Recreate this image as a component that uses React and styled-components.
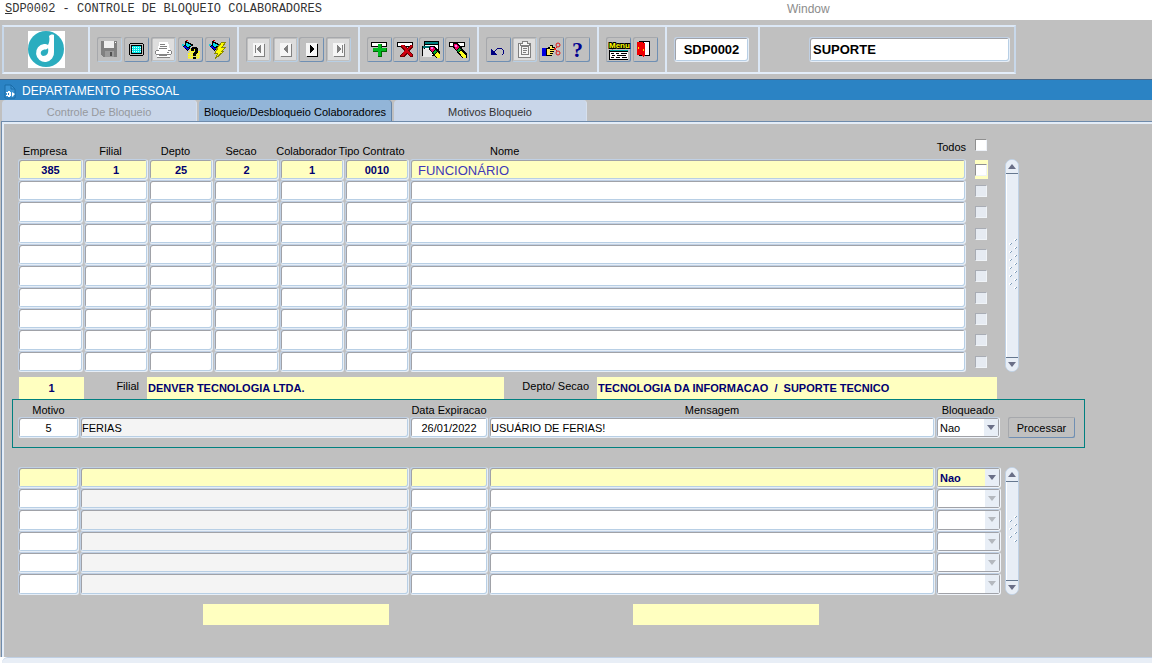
import React, { useState } from 'react';
import styled, { createGlobalStyle, css } from 'styled-components';

const employees = [
    { empresa: '385', filial: '1', depto: '25', secao: '2', colaborador: '1', contrato: '0010', nome: 'FUNCIONÁRIO' },
    ...Array(9).fill(null),
]

const numberColumns = [
    { key: 'empresa', title: 'Empresa', width: 66 },
    { key: 'filial', title: 'Filial', width: 65 },
    { key: 'depto', title: 'Depto', width: 65 },
    { key: 'secao', title: 'Secao', width: 66 },
    { key: 'colaborador', title: 'Colaborador', width: 65 },
    { key: 'contrato', title: 'Tipo Contrato', width: 65 },
]

const historyRows = [0, 1, 2, 3, 4, 5]

function Icon({children}) {
    return (
        <svg width="25" height="25" viewBox="0 0 25 25" shapeRendering="crispEdges" aria-hidden="true">
            {children}
        </svg>
    )
}

function SaveIcon() {
    return (
        <Icon>
            <path d="M4 4h16v16H6l-2-2z" fill="#808080" />
            <path d="M7 4h10v7H7z" fill="#f0f0f0" />
            <path d="M18 5h1v1h-1z" fill="#fff" />
            <path d="M8 14h9v6H8z" fill="#9a9a9a" />
            <path d="M13 15h2v4h-2z" fill="#505050" />
        </Icon>
    )
}

function ScreenIcon() {
    return (
        <Icon>
            <path d="M6 6h13v1h1v11h-1v1H6v-1H5V7h1z" fill="#000" />
            <path d="M6 7h13v11H6z" fill="#c0c0c0" />
            <path d="M7 8h11v9H7z" fill="#000" />
            <path d="M8 9h9v7H8z" fill="#00e8e8" />
            <path d="M8 10h9M8 12h9M8 14h9" transform="translate(0 .5)" stroke="#d8ffff" strokeDasharray="1 1" />
        </Icon>
    )
}

function PrintIcon() {
    return (
        <Icon>
            <path d="M2 2h21v21H2z" fill="#dedede" />
            <path d="M8 5h9l2 8H7z" fill="#fff" />
            <path d="M9 7.5h5M9 9.5h7M8 11.5h8" stroke="#808080" />
            <path d="M5 13h15v4H5zM6 18h13v2H6z" fill="#fff" />
            <path d="M5 13.5h3M17 13.5h3M4.5 14v3M20.5 14v3M5 17.5h15M6 20.5h13M16 15.5h2M8 18.5h8" stroke="#858585" fill="none" />
        </Icon>
    )
}

function Torch() {
    return (
        <>
            <path d="M7 4h2v1h2v1h2v1h2v2h-2v1h-1v2h-1v1h-1v1H9v-1H8v-1H7v-1H6v-1H5V8h2z" fill="#000" />
            <path d="M8 6h2v1h2v1h1v1h-2v1H9V9H8z" fill="#00d8e8" />
            <path d="M6 9h2v1h1v1h2v1h-1v1H9v-1H8v-1H6z" fill="#0000f0" />
            <path d="M4 7h2v2H4z" fill="#20c8d8" />
            <path d="M8 3h2v1H8z" fill="#e00000" />
        </>
    )
}

function QueryIcon() {
    return (
        <Icon>
            <path d="M12 12h8v2h2v7h-1v1H10v-6h2z" fill="#e6e070" />
            <path d="M12 12.5h8M11 14.5h11M10 16.5h12M10 18.5h12M10 20.5h12" stroke="#ffff00" strokeDasharray="2 1" />
            <Torch />
            <path d="M14 10h5v1h1v5h-1v1h-1v2h-3v-3h1v-1h1v-3h-1v2h-3v-3h1zM15 20h3v2h-3z" fill="#000" />
        </Icon>
    )
}

function BoltIcon() {
    return (
        <Icon>
            <Torch />
            <path d="M17 5h4l-4 5h4l-4 4h2L10 22l3-6h-3l3-5h-1z" fill="#ffff00" stroke="#8a8a00" />
        </Icon>
    )
}

function NavIcon({dir, stop, active}) {
    const ink = active ? '#000' : '#808080'
    return (
        <Icon>
            {!active && <path d="M2 2h21v21H2z" fill="#dcdcdc" />}
            <path d="M8 7h11v13H8z" fill={ink} />
            <path d="M7 6h11v13H7z" fill="#f6f6f6" />
            <path d={dir === 'next' ? 'M11 8v8h1v-1h1v-1h1v-1h1v-2h-1v-1h-1V9h-1V8z' : 'M15 8v8h-1v-1h-1v-1h-1v-1h-1v-2h1v-1h1V9h1V8z'} fill={ink} />
            {stop && <path d={dir === 'next' ? 'M16 8h1v8h-1z' : 'M9 8h1v8H9z'} fill={ink} />}
        </Icon>
    )
}

function RecordBar() {
    return (
        <>
            <path d="M4 5h16v5H4z" fill="#000" />
            <path d="M5 6h14v3H5z" fill="#fff" />
        </>
    )
}

function InsertIcon() {
    return (
        <Icon>
            <RecordBar />
            <path d="M11 7h4v4h5v4h-5v5h-4v-5H6v-4h5z" fill="#006800" />
            <path d="M11 7h3v4h5v3h-5v5h-3v-5H6v-3h5z" fill="#00b820" />
        </Icon>
    )
}

function DeleteIcon() {
    return (
        <Icon>
            <RecordBar />
            <path d="M8 8h3l3 3 3-3h3v2l-4 4 4 4v2h-3l-3-3-3 3H7v-2l4-4-3-3z" fill="#6c0000" />
            <path d="M8 8h2l4 4 4-4h1v1l-4 4 4 5v1h-2l-3-4-4 4H8l4-6-4-4z" fill="#d00010" />
        </Icon>
    )
}

function ClearFormIcon() {
    return (
        <Icon>
            <path d="M5 4h15v15H5z" fill="#000" />
            <path d="M6 5h13v2H6z" fill="#008080" />
            <path d="M6 8h13v10H6z" fill="#fff" />
            <path d="M4 9h11v2H4z" fill="#007070" />
            <path d="M4 12h9v8H4z" fill="#e8e8e8" />
            <path d="M3 9h1v10H3zM15 9h1v3h-1z" fill="#000" />
            <path d="M11 9h4l6 6v6h-4l-7-9z" fill="#000" />
            <path d="M11 10h3l2 2-3 3-2-3z" fill="#f00060" />
            <path d="M12 10h2v2h-2z" fill="#ff70f0" />
            <path d="M16 13l2 2-3 2-1-1z" fill="#00a830" />
            <path d="M18 15l3 3v3h-3l-2-3z" fill="#ffff20" />
        </Icon>
    )
}

function ClearRecordIcon() {
    return (
        <Icon>
            <RecordBar />
            <path d="M8 6h5l9 11v4h-5L8 10z" fill="#000" />
            <path d="M9 7h3l2 3-3 3-2-4z" fill="#f00060" />
            <path d="M10 8h2v2h-2z" fill="#ff70f0" />
            <path d="M14 11l2 2-3 2-1-1z" fill="#00a830" />
            <path d="M16 13l5 6v2h-3l-4-6z" fill="#ffff20" />
        </Icon>
    )
}

function UndoIcon() {
    return (
        <Icon>
            <path d="M5 12h1v1h1v1h1v1h1v1h1v1h1v1H5z" fill="#000080" />
            <path d="M8 14h1v-1h1v-1h1v-1h5v1h1v1h1v4h-1v1h-1v-1h1v-4h-1v-1h-5v1h-1v1H9v1H8z" fill="#000080" />
        </Icon>
    )
}

function PasteIcon() {
    return (
        <Icon>
            <path d="M2 2h21v21H2z" fill="#dedede" />
            <path d="M6.5 6.5h12v14h-12zM9.5 9.5h7v8h-7z" fill="#f4f4f4" stroke="#808080" />
            <path d="M10 4h5v2h2v2H8V6h2z" fill="#f8f8f8" stroke="#808080" />
            <path d="M11 11.5h4M11 13.5h4M11 15.5h3" stroke="#808080" />
        </Icon>
    )
}

function CutIcon() {
    return (
        <Icon>
            <path d="M3 11h4v8H3z" fill="#0000e0" />
            <path d="M7 11h2v-1h2V8h3v2h2v3h-1v2h-1v2h-1v2H7z" fill="#000" />
            <path d="M8 12h3V9h2v2h2v1h-4v1h4v1h-4v1h3v1h-3v1h2v1H8z" fill="#ffe860" />
            <g fill="none" stroke="#e01818" shapeRendering="auto">
                <path d="M15 13l3-3M15 11l3 3" />
                <circle cx="19" cy="8" r="2" />
                <circle cx="19" cy="16" r="2" />
            </g>
        </Icon>
    )
}

function ExitIcon() {
    return (
        <Icon>
            <path d="M6 4h11v15H6z" fill="#000" />
            <path d="M11 5h5v13h-5z" fill="#fff" />
            <path d="M4 5h6v1h2v13h-1v1h-1v-1H9v-1H4z" fill="#f00000" />
            <path d="M5 10h1v2H5zM10 12h1v2h-1z" fill="#ffe000" />
        </Icon>
    )
}

function MenuIcon() {
    return (
        <Icon>
            <MenuWord x="3" y="11">Menu</MenuWord>
            <path d="M3 13h19v10H3z" fill="#000" />
            <path d="M4 13h18v1H4z" fill="#00a0a0" />
            <path d="M4 15h18v7H4z" fill="#fff" />
            <path d="M5 16.5h3M10 16.5h3M15 16.5h6M6 18.5h3M11 18.5h9M5 20.5h3M10 20.5h4M16 20.5h5" stroke="#000" />
        </Icon>
    )
}

function Logo() {
    return (
        <svg width="37" height="37" viewBox="0 0 37 37" role="img" aria-label="Denver">
            <rect width="37" height="37" fill="#fff" />
            <circle cx="18" cy="18" r="18" fill="#2badbf" />
            <path d="M21 5c1-1 3-2 5-1v17a9 9 0 1 1-10-8c2 0 3 0 4 1 1-2 2-5 1-9z" fill="#fff" />
            <path d="M20 17c1 5-1 8-5 8-3-1-3-5 0-6 2-1 4 0 5-2z" fill="#2badbf" />
        </svg>
    )
}

function FormIcon() {
    return (
        <svg width="12" height="15" viewBox="0 0 12 15" aria-hidden="true">
            <path d="M1 1h6l4 4v9H1z" fill="#3a93d4" stroke="#1a6ca8" />
            <path d="M7 1v4h4" fill="none" stroke="#1a6ca8" />
            <path d="M4 7h2v1h1v4H6v1H4v-1H2v-1h1V9H2V8h2zM8 8l3 2-3 3z" fill="#fff" />
            <path d="M4 9h1v2H4z" fill="#2b83c4" />
        </svg>
    )
}

function ScrollBar({dots, label}) {
    const height = dots * 8
    return (
        <StyledScrollBar role="group" aria-label={label}>
            <ScrollButton type="button" aria-label="Rolar para cima">
                <svg width="8" height="5" viewBox="0 0 8 5"><path d="M0 5l4-5 4 5z" fill="#6a6f87" /></svg>
            </ScrollButton>
            <ScrollTrack>
                <svg width="10" height={height} viewBox={`0 0 10 ${height}`} shapeRendering="crispEdges" aria-hidden="true">
                    {Array.from({ length: dots * 2 - 1 }, (_, i) => {
                        const x = i % 2 ? 1 : 6
                        const y = i * 4 + 1
                        return (
                            <g key={i}>
                                <path d={`M${x} ${y}h2v1h-1v1h-1z`} fill="#fff" />
                                <path d={`M${x + 2} ${y}h1v1h-1v1h-1v-1h1z`} fill="#7f9db9" />
                            </g>
                        )
                    })}
                </svg>
            </ScrollTrack>
            <ScrollButton type="button" $down aria-label="Rolar para baixo">
                <svg width="8" height="5" viewBox="0 0 8 5"><path d="M0 0h8l-4 5z" fill="#6a6f87" /></svg>
            </ScrollButton>
        </StyledScrollBar>
    )
}

function Select({id, label, value, current, disabled}) {
    return (
        <SelectBox $disabled={disabled}>
            <StyledSelect id={id} aria-label={label} defaultValue={value} disabled={disabled} $current={current}>
                {disabled ? <option value=""></option> : <><option>Nao</option><option>Sim</option></>}
            </StyledSelect>
        </SelectBox>
    )
}

function Toolbar() {
    return (
        <ToolbarArea>
            <ToolbarFrame>
                <Section $width={86}><Logo /></Section>
                <Section $width={149} $spread>
                    <ToolButton aria-label="Salvar" disabled><SaveIcon /></ToolButton>
                    <ToolButton aria-label="Tela"><ScreenIcon /></ToolButton>
                    <ToolButton aria-label="Imprimir" disabled><PrintIcon /></ToolButton>
                    <ToolButton aria-label="Entrar consulta"><QueryIcon /></ToolButton>
                    <ToolButton aria-label="Executar consulta"><BoltIcon /></ToolButton>
                </Section>
                <Section $width={121} $spread>
                    <ToolButton aria-label="Primeiro" disabled><NavIcon dir="prev" stop /></ToolButton>
                    <ToolButton aria-label="Anterior" disabled><NavIcon dir="prev" /></ToolButton>
                    <ToolButton aria-label="Proximo"><NavIcon dir="next" active /></ToolButton>
                    <ToolButton aria-label="Ultimo" disabled><NavIcon dir="next" stop /></ToolButton>
                </Section>
                <Section $width={119} $spread>
                    <ToolButton aria-label="Inserir"><InsertIcon /></ToolButton>
                    <ToolButton aria-label="Excluir"><DeleteIcon /></ToolButton>
                    <ToolButton aria-label="Limpar tela"><ClearFormIcon /></ToolButton>
                    <ToolButton aria-label="Limpar registro"><ClearRecordIcon /></ToolButton>
                </Section>
                <Section $width={120} $spread>
                    <ToolButton aria-label="Desfazer"><UndoIcon /></ToolButton>
                    <ToolButton aria-label="Colar" disabled><PasteIcon /></ToolButton>
                    <ToolButton aria-label="Recortar"><CutIcon /></ToolButton>
                    <ToolButton aria-label="Ajuda"><HelpMark>?</HelpMark></ToolButton>
                </Section>
                <Section $width={68} $spread>
                    <ToolButton aria-label="Menu"><MenuIcon /></ToolButton>
                    <ToolButton aria-label="Sair"><ExitIcon /></ToolButton>
                </Section>
                <Section $width={93} $spread>
                    <ToolbarInput aria-label="Programa" defaultValue="SDP0002" $width={75} $center />
                </Section>
                <Section $width={254} $end>
                    <ToolbarInput aria-label="Usuario" defaultValue="SUPORTE" $width={201} />
                </Section>
            </ToolbarFrame>
        </ToolbarArea>
    )
}

function EmployeesTable() {
    let [all, setAll] = useState(false)

    return (
        <Block>
            <Table>
                <colgroup>
                    {numberColumns.map(c => <Col key={c.key} $width={c.width} />)}
                    <col />
                    <Col $width={38} />
                </colgroup>
                <thead>
                    <tr>
                        {numberColumns.map(c => (
                            <HeadCell key={c.key} scope="col"><HeadText>{c.title}</HeadText></HeadCell>
                        ))}
                        <HeadCell scope="col">
                            <NameHead>
                                <span>Nome</span>
                                <AllLabel htmlFor="todos">Todos</AllLabel>
                            </NameHead>
                        </HeadCell>
                        <CheckHead>
                            <CheckBox id="todos" type="checkbox" checked={all} onChange={e => setAll(e.target.checked)} />
                        </CheckHead>
                    </tr>
                </thead>
                <tbody>
                    {employees.map((row, i) => (
                        <tr key={i}>
                            {numberColumns.map(c => (
                                <Cell key={c.key}>
                                    <Input aria-label={`${c.title} ${i + 1}`} defaultValue={row ? row[c.key] : ''} $current={!!row} $center />
                                </Cell>
                            ))}
                            <Cell>
                                <NameInput aria-label={`Nome ${i + 1}`} defaultValue={row ? row.nome : ''} $current={!!row} />
                            </Cell>
                            <Cell>
                                <CheckSlot $current={!!row}>
                                    <CheckBox type="checkbox" aria-label={`Selecionar ${i + 1}`} disabled={!row} />
                                </CheckSlot>
                            </Cell>
                        </tr>
                    ))}
                </tbody>
            </Table>
            <ScrollSlot $offset={35}><ScrollBar dots={7} label="Rolagem de colaboradores" /></ScrollSlot>
        </Block>
    )
}

function HistoryTable() {
    return (
        <Block $gap={19}>
            <Table>
                <colgroup>
                    <Col $width={62} />
                    <Col $width={330} />
                    <Col $width={79} />
                    <col />
                    <Col $width={69} />
                </colgroup>
                <tbody>
                    {historyRows.map(i => (
                        <tr key={i}>
                            <Cell><Input aria-label={`Motivo ${i + 1}`} $current={i === 0} $center /></Cell>
                            <Cell><Input aria-label={`Descricao ${i + 1}`} readOnly $current={i === 0} $muted /></Cell>
                            <Cell><Input aria-label={`Data ${i + 1}`} $current={i === 0} $center /></Cell>
                            <Cell><Input aria-label={`Mensagem ${i + 1}`} $current={i === 0} /></Cell>
                            <SelectCell>
                                <Select label={`Bloqueado ${i + 1}`} value={i === 0 ? 'Nao' : ''} current={i === 0} disabled={i !== 0} />
                            </SelectCell>
                        </tr>
                    ))}
                </tbody>
            </Table>
            <ScrollSlot $offset={0}><ScrollBar dots={4} label="Rolagem do historico" /></ScrollSlot>
        </Block>
    )
}

function App() {
    let [tab, setTab] = useState(1)

    return (
        <>
            <GlobalStyle />
            <Page>
                <MenuBar>
                    <MenuTitle><u>S</u>DP0002 - CONTROLE DE BLOQUEIO COLABORADORES</MenuTitle>
                    <WindowMenu type="button">Window</WindowMenu>
                </MenuBar>
                <Toolbar />
                <TitleBar><FormIcon /><h1>DEPARTAMENTO PESSOAL</h1></TitleBar>
                <Tabs role="tablist">
                    <Tab role="tab" disabled>Controle De Bloqueio</Tab>
                    <Tab role="tab" aria-selected={tab === 1} $active={tab === 1} onClick={() => setTab(1)}>Bloqueio/Desbloqueio Colaboradores</Tab>
                    <Tab role="tab" aria-selected={tab === 2} $active={tab === 2} onClick={() => setTab(2)}>Motivos Bloqueio</Tab>
                </Tabs>
                <Panel>
                    <EmployeesTable />
                    <Summary>
                        <SummaryValue aria-label="Codigo filial" defaultValue="1" readOnly $center />
                        <SummaryLabel htmlFor="filial">Filial</SummaryLabel>
                        <SummaryValue id="filial" defaultValue="DENVER TECNOLOGIA LTDA." readOnly />
                        <SummaryLabel htmlFor="depto">Depto/ Secao</SummaryLabel>
                        <SummaryValue id="depto" defaultValue="TECNOLOGIA DA INFORMACAO  /  SUPORTE TECNICO" readOnly />
                    </Summary>
                    <BlockForm onSubmit={e => e.preventDefault()}>
                        <Field>
                            <label htmlFor="motivo">Motivo</label>
                            <Input id="motivo" defaultValue="5" $center />
                        </Field>
                        <Field>
                            <Input aria-label="Descricao do motivo" defaultValue="FERIAS" readOnly $muted />
                        </Field>
                        <Field>
                            <label htmlFor="data">Data Expiracao</label>
                            <Input id="data" defaultValue="26/01/2022" $center />
                        </Field>
                        <Field>
                            <label htmlFor="mensagem">Mensagem</label>
                            <Input id="mensagem" defaultValue="USUÁRIO DE FERIAS!" />
                        </Field>
                        <Field>
                            <label htmlFor="bloqueado">Bloqueado</label>
                            <Select id="bloqueado" value="Nao" />
                        </Field>
                        <ProcessButton type="submit">Processar</ProcessButton>
                    </BlockForm>
                    <HistoryTable />
                    <Footer>
                        <FooterValue aria-label="Usuario inclusao" readOnly />
                        <FooterValue aria-label="Usuario alteracao" readOnly />
                    </Footer>
                </Panel>
                <StatusArea><StatusBar /></StatusArea>
            </Page>
        </>
    );
}

export default App;

// Styled Components

const GlobalStyle = createGlobalStyle`
    * {
        box-sizing: border-box;
    }
    body {
        margin: 0;
        background-color: #c0c0c0;
        font-family: "Liberation Sans", Arial, sans-serif;
        font-size: 11px;
        line-height: 14px;
        color: #000;
    }
    button, input, select {
        margin: 0;
        padding: 0;
        font: inherit;
        color: inherit;
    }
    svg {
        display: block;
    }
`

/* sunken edge shared by the text boxes and lists */
const sunken = css`
    border: 1px solid;
    border-color: #c0d0e4 #e6eef7 #e6eef7 #c0d0e4;
    border-radius: 3px;
    box-shadow: inset 1px 1px #a0a2a8, inset -1px -1px #b8cfe5;
    outline: none;
`

const Page = styled.div`
    display: flex;
    flex-direction: column;
    min-height: 100vh;
`

const MenuBar = styled.header`
    display: grid;
    grid-template-columns: 787px 1fr;
    align-items: center;
    height: 20px;
    padding-bottom: 2px;
    background-color: #fff;
`

const MenuTitle = styled.span`
    padding-left: 5px;
    font-family: "Liberation Mono", "Courier New", monospace;
    font-size: 12px;
    color: #333;
`

const WindowMenu = styled.button`
    justify-self: start;
    border: 0;
    background: none;
    font-size: 12px;
    color: #8c8c8c;
`

const ToolbarArea = styled.div`
    padding: 5px 2px;
`

const ToolbarFrame = styled.div`
    display: flex;
    width: fit-content;
    height: 49px;
    border: 2px solid;
    border-color: #dce8f6 #c8d8ea #e4eefa #c8d8ea;
`

const Section = styled.div`
    display: flex;
    align-items: center;
    justify-content: ${p => p.$spread ? 'space-between' : p.$end ? 'flex-end' : 'center'};
    width: ${p => p.$width}px;
    padding: 0 ${p => p.$end ? 4 : 7}px;
    border-right: 2px solid #dce8f6;
    &:last-child {
        border-right: 0;
    }
`

const ToolButton = styled.button.attrs({ type: 'button' })`
    display: flex;
    align-items: center;
    justify-content: center;
    width: 25px;
    height: 25px;
    border: 0;
    border-radius: 2px;
    background-color: #c0c0c0;
    box-shadow: inset 1px 1px #a6a8ac, inset -1px -1px #6f8fb3;
    &:disabled {
        box-shadow: inset 1px 1px #a6a8ac, inset -1px -1px #b8cfe5;
    }
`

const HelpMark = styled.span`
    font-family: "Liberation Serif", "Times New Roman", serif;
    font-size: 22px;
    font-weight: 700;
    line-height: 24px;
    color: #000090;
`

const MenuWord = styled.text`
    font-family: "Liberation Sans", Arial, sans-serif;
    font-size: 8px;
    font-weight: 700;
    fill: #ffff00;
    stroke: #000;
    stroke-width: 2px;
    paint-order: stroke;
`

const ToolbarInput = styled.input`
    ${sunken}
    width: ${p => p.$width}px;
    height: 25px;
    padding: 0 3px;
    background-color: #fff;
    font-size: 13px;
    font-weight: 700;
    text-align: ${p => p.$center ? 'center' : 'left'};
`

const TitleBar = styled.div`
    display: flex;
    align-items: center;
    gap: 6px;
    height: 21px;
    padding: 2px 4px 0;
    border-top: 1px solid #4a6a8c;
    background-color: #2b83c4;
    color: #fff;
    h1 {
        margin: 0;
        font-size: 12px;
        font-weight: 400;
    }
`

const Tabs = styled.div`
    display: flex;
    gap: 2px;
    height: 21px;
    padding-left: 2px;
`

const Tab = styled.button.attrs({ type: 'button' })`
    width: 193px;
    padding-top: 3px;
    border: 0;
    border-right: 1px solid ${p => p.$active ? '#6585a8' : '#d6e0ee'};
    border-radius: 4px 4px 0 0;
    background-color: ${p => p.$active ? '#92b5d8' : '#c9d6e9'};
    color: ${p => p.$active ? '#000' : '#333'};
    white-space: nowrap;
    &:disabled {
        width: 195px;
        color: #96999e;
    }
`

const Panel = styled.main`
    flex: 1;
    margin-left: 1px;
    padding: 2px 67px 0 10px;
    border-top: 1px solid #6f8bab;
    border-left: 1px solid #6f8bab;
    box-shadow: inset 2px 2px #e4edf8;
`

const Block = styled.div`
    display: flex;
    margin: ${p => p.$gap || 0}px 66px 0 6px;
`

const Table = styled.table`
    flex: 1;
    width: 100%;
    table-layout: fixed;
    border-collapse: collapse;
`

const Col = styled.col`
    width: ${p => p.$width}px;
`

const HeadCell = styled.th`
    height: 35px;
    padding: 0 0 1px;
    vertical-align: bottom;
    font-weight: 400;
    white-space: nowrap;
`

const HeadText = styled.span`
    display: flex;
    justify-content: center;
    padding-right: 12px;
`

const NameHead = styled.div`
    display: flex;
    justify-content: space-between;
    padding: 0 1px 0 80px;
`

const AllLabel = styled.label`
    margin: -4px 0 4px;
`

const CheckHead = styled.td`
    padding: 15px 0 0 8px;
    vertical-align: top;
`

const Cell = styled.td`
    height: 21px;
    padding: 0 1px 0 0;
    tr:nth-child(3n) & {
        height: 22px;
    }
`

const SelectCell = styled(Cell)`
    padding-right: 4px;
`

const Input = styled.input`
    ${sunken}
    display: block;
    width: 100%;
    height: 21px;
    padding: 0 1px;
    background-color: ${p => p.$current ? '#ffffc0' : p.$muted ? '#f4f4f4' : '#fff'};
    color: ${p => p.$current ? '#000070' : '#000'};
    font-weight: ${p => p.$current ? 700 : 400};
    text-align: ${p => p.$center ? 'center' : 'left'};
    tr:nth-child(3n) & {
        height: 22px;
    }
`

const NameInput = styled(Input)`
    padding: 2px 7px 0;
    font-size: 13px;
    font-weight: 400;
    color: #4038b8;
`

const CheckSlot = styled.div`
    display: flex;
    align-items: center;
    width: 13px;
    height: 19px;
    margin-left: 8px;
    background-color: ${p => p.$current ? '#ffffc0' : 'transparent'};
`

const CheckBox = styled.input`
    appearance: none;
    display: block;
    width: 12px;
    height: 12px;
    border: 1px solid;
    border-color: #909090 #eef2f8 #eef2f8 #909090;
    background-color: #fff;
    &:checked {
        background-color: #6a6f87;
    }
    &:disabled {
        border-color: #a8acb4 #f0f4f8 #f0f4f8 #a8acb4;
        background-color: #e6ebf2;
    }
`

const ScrollSlot = styled.div`
    display: flex;
    padding-top: ${p => p.$offset}px;
`

const StyledScrollBar = styled.div`
    display: flex;
    flex-direction: column;
    width: 14px;
    border: 1px solid #c0d2e6;
    border-radius: 7px;
    background-color: #e8eef6;
    overflow: hidden;
`

const ScrollButton = styled.button`
    display: flex;
    align-items: center;
    justify-content: center;
    height: 14px;
    border: 0;
    border-${p => p.$down ? 'top' : 'bottom'}: 1px solid #66788f;
    background-color: #e8eef6;
`

const ScrollTrack = styled.div`
    display: flex;
    flex: 1;
    align-items: center;
    justify-content: center;
    border-left: 1px solid #fff;
`

const SelectBox = styled.div`
    position: relative;
    height: 21px;
    &::after {
        content: "";
        position: absolute;
        top: 2px;
        right: 2px;
        bottom: 2px;
        width: 14px;
        background-color: #e8eef6;
        pointer-events: none;
    }
    &::before {
        content: "";
        position: absolute;
        z-index: 1;
        top: 8px;
        right: 5px;
        border: 4px solid transparent;
        border-top: 5px solid ${p => p.$disabled ? '#b4b8be' : '#6a6f87'};
        border-bottom: 0;
        pointer-events: none;
    }
    tr:nth-child(3n) & {
        height: 22px;
    }
`

const StyledSelect = styled.select`
    ${sunken}
    appearance: none;
    display: block;
    width: 100%;
    height: 100%;
    padding: 0 16px 0 3px;
    border-color: #c0d0e4 #f0f4fa #f0f4fa #c0d0e4;
    box-shadow: inset 1px 1px #a0a2a8, inset -1px -1px #a0a2a8;
    background-color: ${p => p.$current ? '#ffffc0' : '#fff'};
    color: ${p => p.$current ? '#000070' : '#000'};
    font-weight: ${p => p.$current ? 700 : 400};
    opacity: 1;
`

const Summary = styled.div`
    display: grid;
    grid-template-columns: 65px 63px 357fr 93px 400fr;
    margin: 5px 88px 0 7px;
`

const SummaryValue = styled.input`
    width: 100%;
    height: 22px;
    padding: 0 1px;
    border: 0;
    background-color: #ffffc0;
    color: #000070;
    font-weight: 700;
    text-align: ${p => p.$center ? 'center' : 'left'};
`

const SummaryLabel = styled.label`
    padding: 2px 8px 0 0;
    text-align: right;
`

const BlockForm = styled.form`
    display: grid;
    grid-template-columns: 62px 330px 79px 1fr 65px 83px;
    align-items: end;
    padding: 3px 0 9px 5px;
    border: 1px solid #008080;
`

const Field = styled.div`
    display: flex;
    flex-direction: column;
    padding-right: 1px;
    text-align: center;
    white-space: nowrap;
`

const ProcessButton = styled.button`
    width: 67px;
    height: 21px;
    margin-left: 7px;
    border: 0;
    border-radius: 2px;
    background-color: #c0c0c0;
    box-shadow: inset 1px 1px #a6a8ac, inset -1px -1px #6f8fb3;
`

const Footer = styled.div`
    display: flex;
    gap: 244px;
    padding: 9px 0 32px 191px;
`

const FooterValue = styled.input`
    width: 186px;
    height: 21px;
    border: 0;
    background-color: #ffffc0;
`

const StatusArea = styled.footer`
    padding-left: 2px;
    background-color: #fff;
`

const StatusBar = styled.div`
    height: 6px;
    border-top: 1px solid #c0d0e4;
    border-radius: 6px 0 0 0;
    background-color: #e8eef6;
`
